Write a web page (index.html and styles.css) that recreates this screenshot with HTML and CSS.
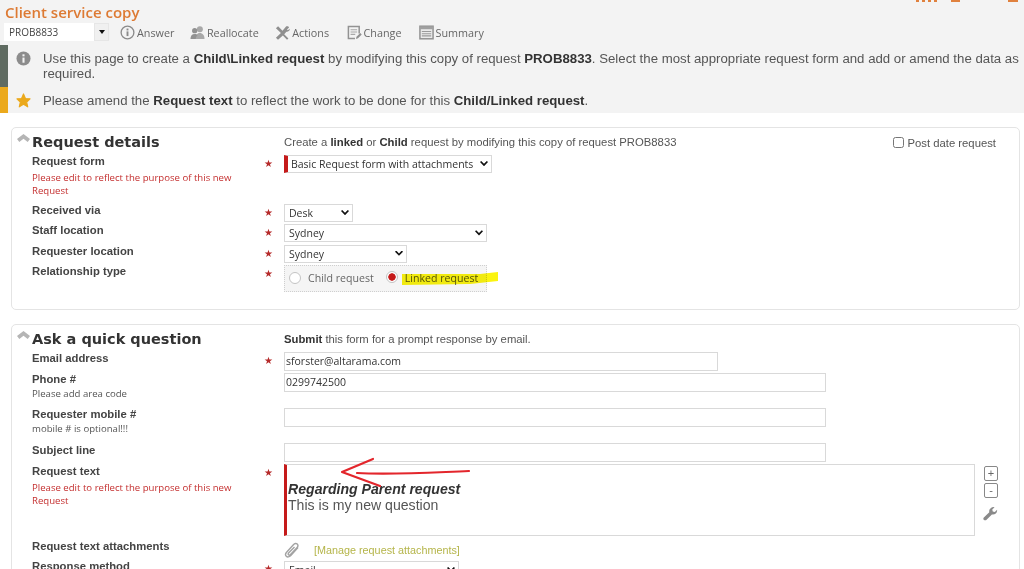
FILE: index.html
```html
<!DOCTYPE html>
<html lang="en">
<head>
<meta charset="utf-8">
<title>Client service copy</title>
<link rel="stylesheet" href="styles.css">
</head>
<body>
<header class="top">
  <h1 class="title">Client service copy</h1>
  <div class="toolbar">
    <div class="combo"><span class="combo-text">PROB8833</span><span class="combo-btn"><i class="caret"></i></span></div>
    <a class="tool tool-answer"><svg class="ico" viewBox="0 0 16 16"><circle cx="8" cy="8" r="6.800" fill="none" stroke="#8a8a8a" stroke-width="1.400"/><rect x="7" y="6.800" width="2" height="5" fill="#8a8a8a"/><rect x="7" y="3.800" width="2" height="2" fill="#8a8a8a"/></svg>Answer</a>
    <a class="tool tool-realloc"><svg class="ico" viewBox="0 0 16 16"><circle cx="10.500" cy="4.500" r="3.200" fill="#a8a8a8"/><path d="M5.500 15c0-4 2-6.500 5-6.500s5 2.500 5 6.500z" fill="#a8a8a8"/><circle cx="5" cy="6" r="2.800" fill="#919191"/><path d="M0.500 15c0-3.500 1.600-5.500 4.500-5.500 1.500 0 2.500.5 3 1.500-1.200 1-1.800 2.300-1.800 4z" fill="#919191"/></svg>Reallocate</a>
    <a class="tool tool-actions"><svg class="ico" viewBox="0 0 16 16"><path d="M1 3.500 3.300 1.300 8 6l4-4.600c1.300-.5 2.700 0 3 1.300l-2.200 2 .9 1 2-1.600c.3 1.500-1 3.500-3.500 3L9.800 9.800l4.500 4.500-1.500 1.500L8.400 11.200 3.200 15.700 1 13.600 6.300 8.600z" fill="#8f8f8f"/></svg>Actions</a>
    <a class="tool tool-change"><svg class="ico" viewBox="0 0 16 16"><path d="M13 9V1.500H1.500v13h7" fill="none" stroke="#929292" stroke-width="1.600"/><path d="M3.800 5h7M3.800 7.500h7M3.800 10h5" stroke="#a8a8a8" stroke-width="1.100"/><path d="M9.500 14.800l.6-2.400 4-3.800 1.600 1.600-4 3.800z" fill="#8f8f8f"/></svg>Change</a>
    <a class="tool tool-summary"><svg class="ico" viewBox="0 0 16 16"><rect x="1" y="1.300" width="14" height="13.400" fill="#eaeaea" stroke="#929292" stroke-width="1.600"/><rect x="1" y="1.500" width="14" height="3" fill="#a0a0a0"/><path d="M3 7h10M3 9.300h10M3 11.600h10" stroke="#9a9a9a" stroke-width="1.100"/></svg>Summary</a>
  </div>
  <div class="msg msg-info">
    <svg class="msg-ico" viewBox="0 0 16 16"><circle cx="8" cy="8" r="7.500" fill="#8c8c8c"/><rect x="6.900" y="7" width="2.200" height="5.500" fill="#f3f3f3"/><rect x="6.900" y="3.500" width="2.200" height="2.200" fill="#f3f3f3"/></svg>
    <p>Use this page to create a <b>Child\Linked request</b> by modifying this copy of request <b>PROB8833</b>. Select the most appropriate request form and add or amend the data as required.</p>
  </div>
  <div class="msg msg-warn">
    <svg class="msg-ico" viewBox="0 0 16 16"><path d="M8 1 10.100 5.800 15 6.200 11.400 9.600 12.500 14.800 8 12.100 3.500 14.800 4.600 9.600 1 6.200 5.900 5.800Z" fill="#eba91c" stroke="#eba91c" stroke-width="1.200" stroke-linejoin="round"/></svg>
    <p>Please amend the <b>Request text</b> to reflect the work to be done for this <b>Child/Linked request</b>.</p>
  </div>
</header>

<main class="content">
  <section class="panel panel-details">
    <div class="panel-head">
      <h2><i class="chev"></i>Request details</h2>
      <p class="intro">Create a <b>linked</b> or <b>Child</b> request by modifying this copy of request PROB8833</p>
      <label class="post-date"><input type="checkbox">Post date request</label>
    </div>
    <div class="row row-form">
      <div class="lab"><b>Request form</b><small class="red">Please edit to reflect the purpose of this new Request</small></div>
      <span class="star">★</span>
      <div class="sel sel-form"><span>Basic Request form with attachments</span><i class="arrow"></i></div>
    </div>
    <div class="row row-sel">
      <div class="lab"><b>Received via</b></div><span class="star">★</span>
      <div class="sel sel-desk"><span>Desk</span><i class="arrow"></i></div>
    </div>
    <div class="row row-sel">
      <div class="lab"><b>Staff location</b></div><span class="star">★</span>
      <div class="sel sel-staff"><span>Sydney</span><i class="arrow"></i></div>
    </div>
    <div class="row row-sel">
      <div class="lab"><b>Requester location</b></div><span class="star">★</span>
      <div class="sel sel-req"><span>Sydney</span><i class="arrow"></i></div>
    </div>
    <div class="row">
      <div class="lab"><b>Relationship type</b></div><span class="star">★</span>
      <div class="radios">
        <span class="radio"></span><span class="radio-text">Child request</span>
        <span class="radio on"></span><span class="radio-text hl">Linked request</span>
      </div>
    </div>
  </section>

  <section class="panel panel-ask">
    <div class="panel-head">
      <h2><i class="chev"></i>Ask a quick question</h2>
      <p class="intro"><b>Submit</b> this form for a prompt response by email.</p>
    </div>
    <div class="row row-email">
      <div class="lab"><b>Email address</b></div><span class="star">★</span>
      <div class="inp inp-email">sforster@altarama.com</div>
    </div>
    <div class="row row-phone">
      <div class="lab"><b>Phone #</b><small>Please add area code</small></div><span class="star"></span>
      <div class="inp inp-wide">0299742500</div>
    </div>
    <div class="row row-mobile">
      <div class="lab"><b>Requester mobile #</b><small>mobile # is optional!!!</small></div><span class="star"></span>
      <div class="inp inp-wide"></div>
    </div>
    <div class="row row-subject">
      <div class="lab"><b>Subject line</b></div><span class="star"></span>
      <div class="inp inp-wide"></div>
    </div>
    <div class="row row-text">
      <div class="lab"><b>Request text</b><small class="red">Please edit to reflect the purpose of this new Request</small></div><span class="star">★</span>
      <div class="rich"><em>Regarding Parent request</em><span>This is my new question</span></div>
      <div class="side">
        <span class="sq">+</span><span class="sq">-</span>
        <svg class="wrench" viewBox="0 0 16 16"><path d="M1.800 15.200a1.700 1.700 0 0 1-.9-2.900l5.800-5.600C6.200 4.200 8 1 11.300 1l1 .2-2.400 2.500.5 2.200 2.200.5L15 4c.5 3.500-2.600 5.700-5.500 5L3.800 14.700c-.5.500-1.300.7-2 .5z" fill="#8a8a8a"/></svg>
      </div>
    </div>
    <div class="row row-attach">
      <div class="lab"><b>Request text attachments</b></div><span class="star"></span>
      <div class="attach">
        <svg class="clip" viewBox="0 0 16 16"><path d="M14 5.500 6.800 13.500c-1.500 1.700-3.500 1.800-4.500.8s-.9-2.900.5-4.400l6.600-7.200c1.300-1.400 2.900-1.500 3.800-.6s.9 2.400-.3 3.700L6.500 12.500c-.7.800-1.500.8-2 .3s-.4-1.300.3-2.100L10.500 5" fill="none" stroke="#a3a3a3" stroke-width="1.400"/></svg>
        <a class="manage">[Manage request attachments]</a>
      </div>
    </div>
    <div class="row row-resp">
      <div class="lab"><b>Response method</b></div><span class="star">★</span>
      <div class="sel sel-resp"><span>Email</span><i class="arrow"></i></div>
    </div>
  </section>
</main>

<svg class="scribble" viewBox="0 0 1024 569" aria-hidden="true">
  <path class="marker" d="M402 274 480 274 498 272 498 281 470 284 402 285Z"/>
  <path class="pen" d="M373 459 342 472 380 486"/>
  <path class="pen" d="M357 473C390 475 420 473 469 471"/>
</svg>
</body>
</html>
```
FILE: styles.css
```css
* { box-sizing: border-box; }
html, body { margin: 0; padding: 0; height: 569px; overflow: hidden; background: #fff; }
body { position: relative; font-family: "Open Sans", "Liberation Sans", sans-serif; color: #444; }
b { font-weight: 700; }

.top { background: #f3f3f3; height: 113px; position: relative; overflow: hidden; }
.top::before { content: ""; position: absolute; left: 916px; top: 0; width: 104px; height: 2px; background: linear-gradient(90deg, #e0813e 0 3px, transparent 3px 6px, #e0813e 6px 9px, transparent 9px 12px, #e0813e 12px 15px, transparent 15px 18px, #e0813e 18px 21px, transparent 21px 35px, #e0813e 35px 44px, transparent 44px 92px, #e0813e 92px 102px, transparent 102px); }
.title { margin: 0; padding: 3px 0 0 5px; height: 23px; font-size: 15px; line-height: 19px; font-weight: 600; color: #dd7a33; font-family: "Open Sans", sans-serif; }
.toolbar { display: flex; align-items: center; height: 18px; margin-left: 4px; font-size: 10.800px; color: #666; }
.combo { display: flex; width: 105px; height: 18px; background: #fff; }
.combo-text { flex: 1; padding-left: 5px; line-height: 18px; font-size: 10px; color: #444; }
.combo-btn { width: 15px; background: #f0f0f0; border: 1px solid #e6e6e6; display: flex; align-items: center; justify-content: center; }
.caret { border: 3.500px solid transparent; border-top: 4px solid #111; border-bottom: 0; }
.tool { display: flex; align-items: center; gap: 2px; }
.ico { width: 15px; height: 15px; flex: none; }
.tool-answer { margin-left: 11px; }
.tool-realloc { margin-left: 15.500px; }
.tool-actions { margin-left: 16.500px; }
.tool-change { margin-left: 17.500px; }
.tool-summary { margin-left: 17px; }

.msg { display: flex; font-family: "Liberation Sans", sans-serif; font-size: 13.230px; line-height: 15px; color: #555; border-left: 8px solid; }
.msg b { color: #333; }
.msg p { margin: 0; padding-left: 12px; flex: 1; }
.msg-ico { width: 15px; height: 15px; margin-left: 8px; flex: none; }
.msg-info { border-color: #5f6b61; height: 42px; margin-top: 4px; padding-top: 6px; }
.msg-warn { border-color: #eba91c; height: 26px; padding-top: 6px; }

.content { padding: 14px 4px 0 11px; display: flex; flex-direction: column; gap: 14px; }
.panel { border: 1px solid #e4e4e4; border-radius: 5px; padding: 0 0 0 20px; background: #fff; font-size: 11px; }
.panel-details { height: 183px; }
.panel-ask { height: 300px; }
.panel-head { display: grid; grid-template-columns: 252px 1fr auto; height: 26px; align-items: start; }
.panel h2 { margin: 0; font-family: "DejaVu Sans", sans-serif; font-size: 14.500px; font-weight: 700; color: #333; line-height: 20px; padding-top: 4px; position: relative; height: 24px; }
.chev { position: absolute; left: -15px; top: 6px; width: 13px; height: 8px; background: #b5b5b5; clip-path: polygon(50% 0, 100% 62%, 82% 100%, 50% 58%, 18% 100%, 0 62%); }
.intro { margin: 0; padding-top: 7px; font-family: "Liberation Sans", sans-serif; font-size: 11.300px; line-height: 14px; color: #555; }
.intro b { color: #333; }
.post-date { display: flex; align-items: center; gap: 3px; font-family: "Liberation Sans", sans-serif; font-size: 11.300px; color: #555; padding-top: 8px; margin-right: 23px; line-height: 15px; }
.post-date input { width: 11px; height: 11px; margin: 0 0 2px 0; }

.row { display: grid; grid-template-columns: 232px 20px 1fr; align-items: start; position: relative; }
.lab { font-family: "Liberation Sans", sans-serif; padding-right: 28px; }
.lab b { display: block; font-size: 11.300px; line-height: 14px; color: #444; }
.lab small { display: block; font-family: "Open Sans", sans-serif; font-size: 9.600px; line-height: 13px; color: #555; margin-top: 1px; }
.lab small.red { color: #c42f2f; margin-top: 3px; }
.star { color: #b52a2a; font-size: 10px; line-height: 12px; padding-top: 4px; font-family: "DejaVu Sans", sans-serif; }

.sel { position: relative; height: 18px; margin-top: 1px; border: 1px solid #d9d9d9; background: #fff; font-size: 10.500px; line-height: 16px; color: #333; padding-left: 4px; white-space: nowrap; }
.arrow { position: absolute; right: 3px; top: 5px; width: 8px; height: 7px; background: #111; clip-path: polygon(0 15%, 15% 0, 50% 40%, 85% 0, 100% 15%, 50% 75%); }
.sel-form { width: 208px; padding-left: 3px; border-left: 4px solid #c51a1a; }
.sel-desk { width: 69px; }
.sel-staff { width: 203px; }
.sel-req { width: 123px; }
.sel-resp { width: 175px; margin-top: 2px; }
.row-form { height: 49px; }
.row-sel { height: 20.300px; }

.radios { width: 203px; height: 27px; margin-top: 1px; border: 1px dotted #cfcfcf; background: #f5f5f5; display: flex; align-items: center; padding-left: 4px; font-size: 10.600px; color: #666; white-space: nowrap; }
.radio { width: 12px; height: 12px; border-radius: 50%; border: 1px solid #c4c4c4; background: #fff; flex: none; }
.radio.on { background: radial-gradient(circle, #c51a1a 0 3.400px, #fff 4px); margin-left: 12px; margin-top: -2px; }
.radio-text { margin-left: 7px; flex: none; }
.radio-text.hl { color: #555; margin-left: 7px; }

.inp { height: 19px; margin-top: 1px; border: 1px solid #d9d9d9; background: #fff; padding-left: 1px; font-size: 10.500px; line-height: 17px; color: #333; }
.inp-email { width: 434px; }
.inp-wide { width: 542px; }
.row-email { height: 21px; }
.row-phone { height: 35px; }
.row-mobile { height: 35px; }
.row-subject { height: 21px; }
.row-subject .lab, .row-text .lab { padding-top: 1px; }
.row-text { height: 75px; grid-template-columns: 232px 20px 691px 1fr; }
.rich { height: 72px; margin-top: 1px; border: 1px solid #d9d9d9; border-left: 3px solid #c51a1a; padding: 16px 0 0 1px; font-family: "Liberation Sans", sans-serif; font-size: 14.100px; line-height: 16px; color: #555; }
.rich em { display: block; font-weight: 700; font-style: italic; color: #333; }
.rich span { display: block; }
.side { display: flex; flex-direction: column; align-items: flex-start; padding: 3px 0 0 9px; gap: 2px; }
.sq { width: 14px; height: 15px; border: 1px solid #888; border-radius: 2px; font-size: 11px; line-height: 13px; text-align: center; color: #666; font-family: "Liberation Sans", sans-serif; }
.wrench { width: 15px; height: 15px; margin-top: 6px; margin-left: -1px; }
.row-attach { height: 21px; }
.row-attach .lab { padding-top: 1px; }
.attach { display: flex; align-items: center; height: 18px; padding-top: 5px; }
.clip { width: 16px; height: 16px; flex: none; }
.manage { margin-left: 14px; font-family: "Liberation Sans", sans-serif; font-size: 10.800px; color: #b5b54a; }

.scribble { position: absolute; left: 0; top: 0; width: 1024px; height: 569px; pointer-events: none; }
.marker { fill: #fbf40f; mix-blend-mode: multiply; }
.pen { fill: none; stroke: #e3262c; stroke-width: 2.200; stroke-linecap: round; stroke-linejoin: round; }
```
